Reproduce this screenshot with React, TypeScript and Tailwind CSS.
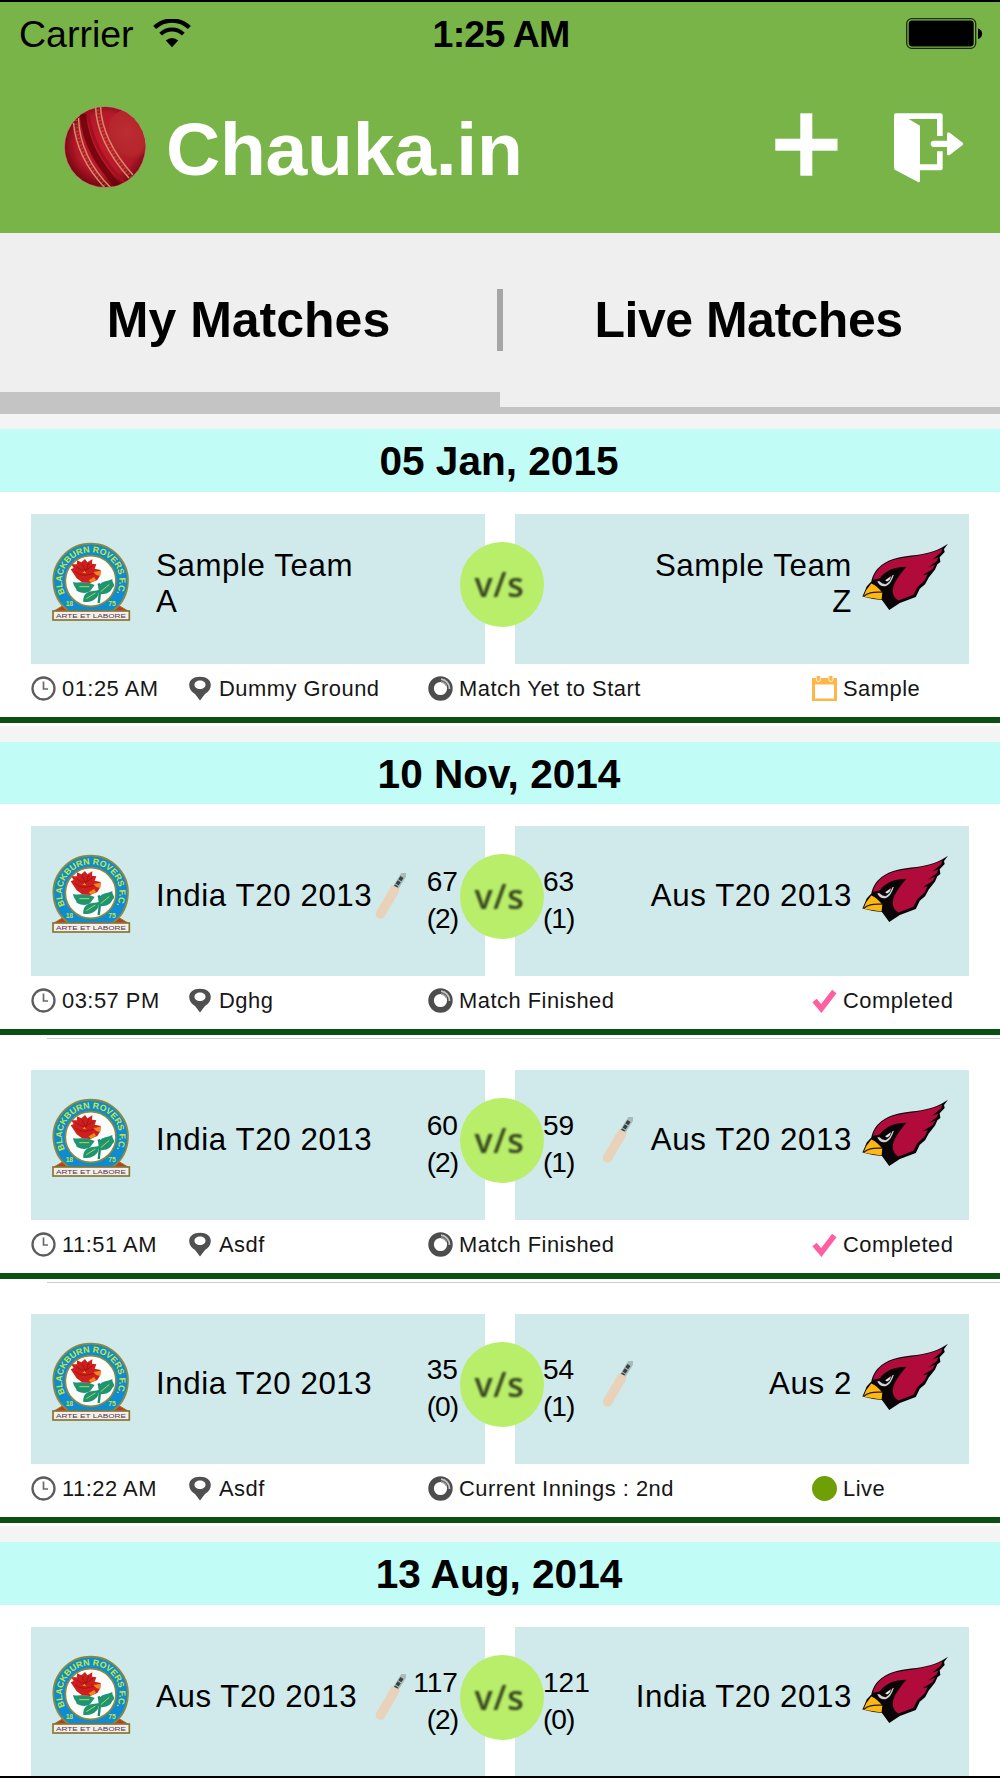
import React from "react";

type Side = { name: string; runs?: string; overs?: string; batting?: boolean };
type Status = "sample" | "completed" | "live";
type Details = { time: string; ground: string; note: string; status: Status };
type Match = { home: Side; away: Side; details?: Details };
type Day = { date: string; matches: Match[] };

const days: Day[] = [
  {
    date: "05 Jan, 2015",
    matches: [
      {
        home: { name: "Sample Team\nA" },
        away: { name: "Sample Team\nZ" },
        details: { time: "01:25 AM", ground: "Dummy Ground", note: "Match Yet to Start", status: "sample" },
      },
    ],
  },
  {
    date: "10 Nov, 2014",
    matches: [
      {
        home: { name: "India T20 2013", runs: "67", overs: "(2)", batting: true },
        away: { name: "Aus T20 2013", runs: "63", overs: "(1)" },
        details: { time: "03:57 PM", ground: "Dghg", note: "Match Finished", status: "completed" },
      },
      {
        home: { name: "India T20 2013", runs: "60", overs: "(2)" },
        away: { name: "Aus T20 2013", runs: "59", overs: "(1)", batting: true },
        details: { time: "11:51 AM", ground: "Asdf", note: "Match Finished", status: "completed" },
      },
      {
        home: { name: "India T20 2013", runs: "35", overs: "(0)" },
        away: { name: "Aus 2", runs: "54", overs: "(1)", batting: true },
        details: { time: "11:22 AM", ground: "Asdf", note: "Current Innings : 2nd", status: "live" },
      },
    ],
  },
  {
    date: "13 Aug, 2014",
    matches: [
      {
        home: { name: "Aus T20 2013", runs: "117", overs: "(2)", batting: true },
        away: { name: "India T20 2013", runs: "121", overs: "(0)" },
      },
    ],
  },
];

function WifiIcon() {
  return (
    <svg viewBox="0 0 38 29" className="-mt-1 h-[29px] w-[38px]" fill="none" stroke="#000">
      <path d="M1.6 8.6 A25 25 0 0 1 36.4 8.6" strokeWidth="4.2" />
      <path d="M7.7 15.2 A16 16 0 0 1 30.3 15.2" strokeWidth="4" />
      <path d="M12.8 21.6 A8.8 8.8 0 0 1 25.2 21.6 L19 28.2 Z" fill="#000" stroke="none" />
    </svg>
  );
}

function BatteryIcon() {
  return (
    <svg viewBox="0 0 77 31" className="h-[31px] w-[77px]">
      <rect x="0.7" y="0.7" width="69" height="29.6" rx="5" fill="none" stroke="#1d2b12" strokeWidth="1.3" />
      <rect x="2.7" y="2.5" width="65" height="26" rx="3.4" fill="#000" />
      <path d="M72 10.5 C77.5 12 77.5 19.5 72 21 Z" fill="#000" />
    </svg>
  );
}

function BallIcon() {
  return (
    <svg viewBox="0 0 82 82" className="h-[82px] w-[82px]">
      <defs>
        <radialGradient id="ball" cx="52%" cy="46%" r="54%">
          <stop offset="0%" stopColor="#c41b2c" />
          <stop offset="70%" stopColor="#b5182a" />
          <stop offset="100%" stopColor="#740710" />
        </radialGradient>
        <radialGradient id="shine" cx="50%" cy="45%" r="60%">
          <stop offset="0%" stopColor="#bd2c33" />
          <stop offset="75%" stopColor="#b5252c" />
          <stop offset="100%" stopColor="#a01a22" stopOpacity="0.6" />
        </radialGradient>
        <clipPath id="ballclip">
          <circle cx="41" cy="41" r="40.5" />
        </clipPath>
      </defs>
      <circle cx="41" cy="41" r="40.6" fill="url(#ball)" stroke="#b98d84" strokeWidth="0.7" />
      <g clipPath="url(#ballclip)" fill="none">
        <ellipse cx="64" cy="29" rx="19" ry="25" transform="rotate(-20 64 29)" fill="url(#shine)" />
        <path d="M19 8 C21 38 36 60 54 80" stroke="#6d0409" strokeWidth="6.5" opacity="0.85" />
        <path d="M24 5 C27 36 41 58 60 76" stroke="#a3101f" strokeWidth="3" />
        <g stroke="#cf8f66" strokeWidth="1.5">
          <path d="M9.5 17 C12 44 24 64 41 82" />
          <path d="M14.5 12 C15.5 42 29 64 47 82" />
          <path d="M31.5 0 C32.5 28 47 52 65 72" />
          <path d="M36.5 0 C37.5 27 52 50 69 69" />
        </g>
        <g stroke="#cf8f66" strokeWidth="3" strokeDasharray="1 2.6" opacity="0.4">
          <path d="M12 14 C13.5 43 26 64 44 82" />
          <path d="M34 0 C35 28 49 51 67 71" />
        </g>
      </g>
    </svg>
  );
}

function PlusIcon() {
  return (
    <svg viewBox="0 0 63 63" className="h-[63px] w-[63px]" fill="#fff">
      <rect x="25.3" y="0.3" width="12" height="62.4" />
      <rect x="0.3" y="25.7" width="62.2" height="12" />
    </svg>
  );
}

function ExitIcon() {
  return (
    <svg viewBox="1182 338 210 210" className="h-[70px] w-[70px]" fill="#fff">
      <path d="M1188 339 H1322 Q1328 339 1328 345 V407 H1311 V356 H1226 L1260 376 V492 H1311 V453 H1328 V504 Q1328 510 1322 510 H1260 V541 Q1260 547 1254 545 L1186 509 Q1182 507 1182 502 V345 Q1182 339 1188 339 Z" />
      <path d="M1301 421 H1341 V401 Q1342 394 1349 397 L1388 427 Q1391 430 1388 434 L1349 464 Q1342 467 1341 460 V440 H1301 Q1292 439 1292 430 Q1292 422 1301 421 Z" />
    </svg>
  );
}

function Crest() {
  return (
    <svg viewBox="38 39 234 234" className="h-[78px] w-[78px] shrink-0 overflow-visible">
      <defs>
        <path id="ring" d="M77.4 192 A86 86 0 1 1 230.6 192" />
      </defs>
      <path d="M44 243 L76 224 H234 L266 243 Z" fill="#c33a20" stroke="#8a7a2c" strokeWidth="3" />
      <path d="M95 248 A112 112 0 1 1 213 248 Z" fill="#0e8bd2" stroke="#8c8a3a" strokeWidth="5" />
      <circle cx="154" cy="153" r="76" fill="#fbfdfd" stroke="#8c8a3a" strokeWidth="5" />
      <text fill="#c8e62e" className="font-['Liberation_Sans'] text-[26px] font-bold">
        <textPath href="#ring" startOffset="2" textLength="346" lengthAdjust="spacingAndGlyphs">
          BLACKBURN ROVERS F.C.
        </textPath>
      </text>
      <text x="79" y="229" fill="#c8e62e" className="font-['Liberation_Sans'] text-[20px] font-bold">18</text>
      <text x="207" y="229" fill="#c8e62e" className="font-['Liberation_Sans'] text-[20px] font-bold">75</text>
      <path d="M178 160 C185 180 181 195 178 219 M178 190 Q195 180 208 164" stroke="#16896c" strokeWidth="7" fill="none" />
      <path d="M178 172 C180 154 200 156 219 147 C217 160 232 164 219 174 C212 191 193 194 181 192 Z" fill="#1e9470" />
      <path d="M101 156 C116 160 134 154 150 159 L166 165 L152 184 C136 194 120 186 112 182 C110 172 103 170 101 156 Z" fill="#1e9470" />
      <path d="M132 216 C130 200 139 186 155 184 L180 180 L176 197 C165 213 150 217 132 216 Z" fill="#1e9470" />
      <path d="M184 185 L210 163 M141 206 L168 189 M120 170 L150 170" stroke="#b6d65a" strokeWidth="3" fill="none" />
      <path d="M94 118 L103 114 L96 103 L113 103 L113 91 L126 97 L137 87 L144 97 L159 88 L158 101 L171 103 L166 116 L184 120 L183 136 L174 150 L152 159 L128 157 L112 145 L105 134 Z" fill="#cf1f1c" />
      <path d="M113 111 Q130 132 160 107 M108 126 Q132 147 174 124 M128 100 L139 125 L148 99" stroke="#a31515" strokeWidth="3" fill="none" />
      <path d="M162 126 L184 122 L182 138 L171 135 Z M148 151 L165 141 L170 150 L155 158 Z M129 128 L136 122 L141 130 Z" fill="#f08a1d" />
      <rect x="41" y="243" width="229" height="27" fill="#f6eee9" stroke="#86762d" strokeWidth="5" />
      <text x="50" y="263" textLength="210" lengthAdjust="spacingAndGlyphs" fill="#4c3458" className="font-['Liberation_Sans'] text-[18px]">ARTE ET LABORE</text>
    </svg>
  );
}

function Cardinal() {
  return (
    <svg viewBox="486 129 262 203" className="h-[68px] w-[87px] shrink-0">
      <path
        d="M745 130 C720 148 690 158 650 164 C605 168 572 174 545 194 C526 209 518 225 514 244 L500 259 L494 274 L487 289 L520 297 L546 300 L568 330 L600 309 L648 291 L660 266 L676 252 L687 232 L699 217 L706 208 L713 192 L722 185 L720 171 L735 155 L733 146 Z"
        fill="#0b0507"
      />
      <path
        d="M519 239 C525 211 548 189 585 178 C625 169 680 168 728 145 L724 157 L698 178 L716 172 L711 183 L684 203 L707 193 L698 207 L668 225 L684 222 L675 240 L652 262 L641 284 L596 301 C577 291 574 270 585 248 C594 232 605 217 620 200 C585 200 557 211 539 235 Z"
        fill="#b10b3c"
      />
      <path d="M514 250 Q533 258 547 278 L545 298 L490 290 L499 270 Z" fill="#fcb814" />
      <path d="M491 289 C506 274 526 277 546 276" stroke="#2b1a05" strokeWidth="4" fill="none" />
      <path d="M532 243 Q539 261 557 258 Q573 254 582 224 L577 226 Q571 246 557 252 Q545 250 539 243 Z" fill="#cfd3d6" />
      <path d="M556 240 L573 228 Q571 241 561 244 Z" fill="#e6e8ea" />
    </svg>
  );
}

function Bat() {
  return (
    <svg viewBox="0 0 32 46" className="h-[46px] w-8 blur-[0.5px]">
      <path d="M29.5 2 L21.5 15" stroke="#7f8d8a" strokeWidth="6" strokeLinecap="round" opacity="0.5" />
      <path d="M28 4 L21.5 14" stroke="#3a4140" strokeWidth="3.6" strokeDasharray="4 1" />
      <path d="M20 18 L6.5 41" stroke="#e8d2b9" strokeWidth="9.5" strokeLinecap="round" />
      <path d="M17 13.5 L25 18" stroke="#e8d2b9" strokeWidth="3" />
    </svg>
  );
}

function ClockIcon() {
  return (
    <svg viewBox="0 0 25 25" className="h-[25px] w-[25px] shrink-0" fill="none">
      <circle cx="12.5" cy="12.5" r="11" stroke="#5c5c5c" strokeWidth="2.3" />
      <path d="M12.5 5.5 V13 H17" stroke="#6a6a6a" strokeWidth="1.7" />
    </svg>
  );
}

function PinIcon() {
  return (
    <svg viewBox="0 0 24 25" className="h-[25px] w-6 shrink-0">
      <path
        fillRule="evenodd"
        fill="#505050"
        d="M12 0.8 C18.5 0.8 22.8 4 22.8 9 C22.8 13 20.5 16 17 18 L12 24.5 L7 18 C3.5 16 1.2 13 1.2 9 C1.2 4 5.5 0.8 12 0.8 Z M12 4.5 C8.8 4.5 6.5 6.2 6.5 8.8 C6.5 11.4 8.8 13 12 13 C15.2 13 17.5 11.4 17.5 8.8 C17.5 6.2 15.2 4.5 12 4.5 Z"
      />
    </svg>
  );
}

function RingIcon() {
  return (
    <svg viewBox="0 0 25 25" className="h-[25px] w-[25px] shrink-0" fill="none">
      <circle cx="12.5" cy="12.5" r="9.4" stroke="#4d4d4d" strokeWidth="5.6" />
      <path d="M13 3.2 A9.5 9.5 0 0 1 21.5 13" stroke="#c4c4c4" strokeWidth="1.8" />
      <path d="M13 5.8 A7 7 0 0 1 18.5 10" stroke="#9a9a9a" strokeWidth="1.5" />
    </svg>
  );
}

function StatusIcon({ status }: { status: Status }) {
  if (status === "sample") {
    return (
      <svg viewBox="0 0 25 25" className="h-[25px] w-[25px] shrink-0">
        <path fillRule="evenodd" fill="#ffb547" d="M0 2 H25 V25 H0 Z M3 8.5 V22.5 H22 V8.5 Z" />
        <path d="M4.5 0 V4 Q6.5 7.5 8.5 4 V0 M16.8 0 V4 Q18.8 7.5 20.8 4 V0" fill="#ffb547" stroke="#ffe6c0" strokeWidth="1.2" />
      </svg>
    );
  }
  if (status === "completed") {
    return (
      <svg viewBox="0 0 25 25" className="h-[25px] w-[25px] shrink-0" fill="none">
        <path d="M2.5 12.5 L9.3 20.5 L22.3 3.5" stroke="#ff5ea2" strokeWidth="5.6" />
      </svg>
    );
  }
  return <span className="h-[25px] w-[25px] shrink-0 rounded-full bg-[#6e9f05]" />;
}

const statusLabel: Record<Status, string> = {
  sample: "Sample",
  completed: "Completed",
  live: "Live",
};

function Score({ side }: { side: Side }) {
  return (
    <div className="mt-[37px] text-[28.1px] leading-[37px]">
      <div>{side.runs}</div>
      <div className="tracking-[-1px]">{side.overs}</div>
    </div>
  );
}

function MatchDetails({ details }: { details: Details }) {
  return (
    <>
      <div className="grid h-[53px] grid-cols-[157px_240px_384px_1fr] items-start pl-[31px] pt-3 text-[21.9px] leading-[26px] tracking-[0.5px] text-[#161616]">
        <div className="flex gap-[6px]"><ClockIcon />{details.time}</div>
        <div className="flex gap-[7px]"><PinIcon />{details.ground}</div>
        <div className="flex gap-[6px]"><RingIcon />{details.note}</div>
        <div className="flex gap-[6px]"><StatusIcon status={details.status} />{statusLabel[details.status]}</div>
      </div>
      <div className="h-[6px] bg-[#0a5013]" />
      <div className="h-[3px]" />
    </>
  );
}

function MatchRow({ match }: { match: Match }) {
  return (
    <article className="bg-white pt-[22px]">
      <div className="relative mx-[31px] flex h-[150px] justify-between">
        <div className="flex w-[454px] items-start bg-[#d0e9ea] pl-[21px] pr-[27px]">
          <div className="mt-[29px]">
            <Crest />
          </div>
          <div className="ml-[26px] mt-[34px] flex h-[72px] w-[218px] items-center whitespace-pre text-[31.25px] leading-9 tracking-[0.6px]">
            {match.home.name}
          </div>
          <div className="mt-[47px] w-8 shrink-0">{match.home.batting && <Bat />}</div>
          <div className="flex flex-1 justify-end text-right">
            <Score side={match.home} />
          </div>
        </div>
        <div className="flex w-[454px] items-start bg-[#d0e9ea] pl-[28px] pr-[20px]">
          <div className="w-[58px]">
            <Score side={match.away} />
          </div>
          <div className="mt-[47px] w-8 shrink-0">{match.away.batting && <Bat />}</div>
          <div className="mt-[34px] flex h-[72px] flex-1 items-center justify-end whitespace-pre text-right text-[31.25px] leading-9 tracking-[0.6px]">
            {match.away.name}
          </div>
          <div className="ml-[10px] mt-[29px]">
            <Cardinal />
          </div>
        </div>
        <div className="absolute left-[428.5px] top-7 flex h-[85px] w-[84px] items-center justify-center rounded-full bg-[#b9ee6b]">
          <span className="-ml-1 -mt-[2px] font-['Open_Sans'] text-[34px] font-semibold leading-none tracking-[0.6px] text-[#36461e] blur-[1px]">
            v/s
          </span>
        </div>
      </div>
      {match.details && <MatchDetails details={match.details} />}
    </article>
  );
}

export default function App() {
  return (
    <div className="flex h-[1778px] w-[1000px] flex-col overflow-hidden border-y-2 border-black bg-white font-['Liberation_Sans',sans-serif] text-black">
      <header className="h-[231px] shrink-0 bg-[#79b448]">
        <div className="grid h-[64px] grid-cols-3 items-center pl-[19px] pr-[17px] text-[37.5px] leading-none">
          <div className="flex items-center gap-[19px] pt-[2px]">
            <span>Carrier</span>
            <WifiIcon />
          </div>
          <div className="pt-[2px] text-center font-bold tracking-[-0.8px]">1:25 AM</div>
          <div className="-mt-[2px] flex justify-end">
            <BatteryIcon />
          </div>
        </div>
        <div className="flex items-start pl-16 pr-9 pt-10">
          <BallIcon />
          <h1 className="ml-5 mt-[1px] text-[75px] font-bold leading-[84px] tracking-[-0.2px] text-white">Chauka.in</h1>
          <div className="ml-auto mt-[7px] flex gap-14">
            <PlusIcon />
            <ExitIcon />
          </div>
        </div>
      </header>

      <nav className="relative grid h-[181px] shrink-0 grid-cols-2 bg-[#efefef] text-[50px] font-bold leading-[58px]">
        <div className="border-b-[22px] border-[#c4c4c4] pr-[3px] pt-[58px] text-center">My Matches</div>
        <div className="border-b-[7px] border-[#c4c4c4] pr-[3px] pt-[58px] text-center tracking-[-0.5px]">Live Matches</div>
        <div className="absolute left-[497px] top-14 h-[62px] w-[6px] bg-[#a6a6a6]" />
      </nav>

      <main className="shrink-0">
        {days.map((day, d) => (
          <section key={day.date}>
            <div className={d === 0 ? "h-[15px] bg-[#f4f4f4]" : "h-4 bg-[#f4f4f4]"} />
            <h2
              className={
                d === 1
                  ? "h-[62px] bg-[#c2fcf6] pr-[2px] text-center text-[40.6px] font-bold leading-[64px]"
                  : "h-[63px] bg-[#c2fcf6] pr-[2px] text-center text-[40.6px] font-bold leading-[65px]"
              }
            >
              {day.date}
            </h2>
            {day.matches.map((match, i) => (
              <React.Fragment key={i}>
                {i > 0 && <div className="ml-[47px] h-[10px] border-t border-[#cfcfcf]" />}
                <MatchRow match={match} />
              </React.Fragment>
            ))}
          </section>
        ))}
      </main>
    </div>
  );
}
